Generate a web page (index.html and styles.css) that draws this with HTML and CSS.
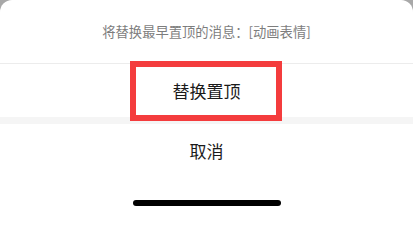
FILE: index.html
```html
<!DOCTYPE html>
<html lang="zh">
<head>
<meta charset="utf-8">
<link rel="stylesheet" href="styles.css">
</head>
<body>
<div class="sheet">
  <div class="caption">将替换最早置顶的消息：[动画表情]</div>
  <div class="action">替换置顶</div>
  <div class="gap"></div>
  <div class="cancel">取消</div>
  <div class="home"><div class="bar"></div></div>
  <div class="highlight"></div>
</div>
</body>
</html>
```
FILE: styles.css
```css
html {
  margin: 0;
  padding: 0;
  background: #ffffff;
}
body {
  margin: 0;
  padding: 0;
  width: 413px;
  height: 207px;
  overflow: hidden;
  background: #a8a8a8;
  font-family: "Noto Sans CJK SC", "Noto Sans", sans-serif;
}
.sheet {
  position: relative;
  background: #ffffff;
  border-radius: 12px 12px 0 0;
  height: 207px;
  display: flex;
  flex-direction: column;
}
.caption {
  display: flex;
  align-items: center;
  justify-content: center;
  font-size: 13.3px;
  color: #7d7d7d;
  border-bottom: 1px solid #ececec;
  box-sizing: border-box;
  height: 64px;
  padding-bottom: 1px;
}
.action {
  height: 53px;
  display: flex;
  align-items: center;
  justify-content: center;
  font-size: 17px;
  color: #1a1a1a;
}
.gap {
  height: 7px;
  background: #f5f5f5;
}
.cancel {
  height: 52px;
  display: flex;
  align-items: center;
  justify-content: center;
  font-size: 17px;
  color: #1a1a1a;
}
.home {
  flex: 1;
  display: flex;
  align-items: flex-end;
  justify-content: center;
  padding-bottom: 1px;
}
.bar {
  width: 148px;
  height: 6px;
  border-radius: 3px;
  background: #000000;
}
.highlight {
  position: absolute;
  left: 130px;
  top: 61px;
  width: 152px;
  height: 60px;
  box-sizing: border-box;
  border: 6px solid #f43c3d;
}
```
